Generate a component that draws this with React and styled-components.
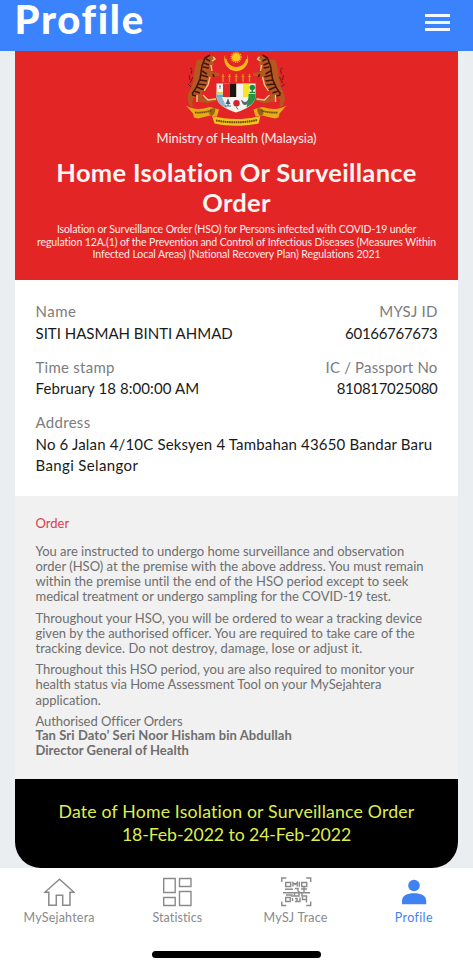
import React from 'react';
import styled, { createGlobalStyle } from 'styled-components';

const GlobalStyle = createGlobalStyle`
  * { box-sizing: border-box; }
  html, body { margin: 0; padding: 0; background: #fff; }
  body { font-family: Lato, "Liberation Sans", sans-serif; }
`;

const Screen = styled.div`
  display: flex;
  flex-direction: column;
  width: 473px;
  height: 967px;
  overflow: hidden;
  background: #fff;
`;

const Header = styled.header`
  display: flex;
  flex: none;
  align-items: flex-start;
  justify-content: space-between;
  height: 51px;
  padding: 0 23px 0 14.5px;
  background: #3a83fd;
`;

const PageTitle = styled.h1`
  margin: 0;
  color: #fff;
  font-size: 40px;
  font-weight: 900;
  line-height: 38px;
  letter-spacing: 1.7px;
  font-variant-ligatures: none;
`;

const MenuButton = styled.button`
  display: flex;
  flex-direction: column;
  gap: 4px;
  width: 25px;
  margin-top: 14px;
  padding: 0;
  border: 0;
  background: none;
`;

const MenuBar = styled.span`
  width: 100%;
  height: 3px;
  background: #f3f8ff;
`;

const Content = styled.main`
  flex: none;
  height: 817px;
  padding: 0 15px;
  background: #eaeef0;
`;

const Card = styled.article`
  display: flex;
  flex-direction: column;
  height: 816.5px;
  border-radius: 0 0 26px 26px;
  overflow: hidden;
  background: #fff;
`;

const Line = styled.span`
  display: block;
  white-space: nowrap;
  letter-spacing: ${(p) => p.$track || 0}px;
  font-variant-ligatures: none;
`;

const Banner = styled.section`
  height: 229px;
  text-align: center;
  color: #ffecea;
  background: #e32526;
`;

const CrestBox = styled.div`
  display: flex;
  justify-content: center;
  height: 79px;

  svg { display: block; }
`;

const Ministry = styled.div`
  font-size: 13px;
  line-height: 16px;
`;

const BannerTitle = styled.h2`
  margin: 11px 0 6px;
  color: #fff4f2;
  font-size: 25.5px;
  font-weight: 700;
  line-height: 30px;
`;

const BannerNote = styled.p`
  margin: 0;
  font-size: 10.5px;
  line-height: 12.5px;
`;

const Details = styled.section`
  display: flex;
  flex-direction: column;
  gap: 12.5px;
  height: 216px;
  padding: 21px 20.5px 0;
`;

const FieldRow = styled.div`
  display: flex;
  justify-content: space-between;
`;

const Field = styled.div`
  font-size: 15px;
  line-height: 21.5px;
  text-align: ${(p) => (p.$end ? 'right' : 'left')};
`;

const Label = styled(Line)`
  color: #7c7c7c;
`;

const Value = styled(Line)`
  color: #1a1a1a;
`;

const OrderSection = styled.section`
  height: 283px;
  padding: 19.5px 20.5px 0;
  color: #6e6e6e;
  font-size: 13px;
  line-height: 15.2px;
  background: #f1f1f1;
`;

const OrderHeading = styled.h3`
  margin: 0 0 13px;
  color: #d6404f;
  font-size: 13px;
  font-weight: 400;
`;

const Paragraph = styled.p`
  margin: 0 0 6px;
`;

const Signature = styled.div`
  font-weight: 700;
  margin-top: -1px;
`;

const Period = styled.section`
  flex: 1;
  padding-top: 20.5px;
  color: #dfee4e;
  font-size: 17.7px;
  line-height: 23.5px;
  text-align: center;
  background: #000;
`;

const TabBar = styled.nav`
  display: grid;
  grid-template-columns: repeat(4, 1fr);
  flex: none;
  height: 83px;
  padding-top: 8px;
`;

const Tab = styled.a`
  display: flex;
  flex-direction: column;
  align-items: center;
  gap: 2px;
  color: ${(p) => (p.$active ? '#3f83f2' : '#8a8a8a')};
  font-size: 12.5px;
  line-height: 16px;

  svg { display: block; width: 32px; height: 32px; }
`;

const HomeIndicator = styled.div`
  align-self: center;
  width: 169px;
  height: 7px;
  border-radius: 4px;
  background: #000;
`;

const Tiger = () => (
  <g>
    <path d="M6 19l-1 4M3 24l1 5M7 26l-3 6M2 33l3 3M4 17l2 1" stroke="#5a1716" strokeWidth="0.9" fill="none" />
    <path d="M20 8c2-3 7-4 9-2l1 3-3 2 1 3-4 2 1 5 9 1-1 3-10 1-1 7c-1 4-3 6-6 8l0 6 10 1 5-1-1 3-8 2-9-1-4-6c-3 4-3 6-2 11l-3-1c-3-5-3-11 0-16 3-5 3-9 4-16 1-6 2-11 3-14z" fill="#b4581f" />
    <path d="M20 8l4 2M18 12l5 2M17 16l6 1M16 20l5 3M15 24l7 2M14 29l7 1M12 33l8 1M11 36l7 3M8 40l6 2M6 44l5 1M27 23l1 3M24 4l-5 3-3 8-2 13-4 9-4 6" stroke="#40150f" strokeWidth="1.5" fill="none" />
    <path d="M27 6l2 2-3 2M25 14l1 6M24 26l-2 8-4 6M17 44l5 5 8-1M11 44l0 7" stroke="#ffd08a" strokeWidth="1.3" fill="none" />
  </g>
);

const Crest = () => (
  <svg width="101" height="76" viewBox="0 0 101 76">
    <path d="M39.200 3.500A12 12 0 1 0 61.300 3.500A11.200 11.200 0 1 1 39.200 3.500Z" fill="#f8b91b" />
    <path d="M39.500 8a11 11 0 0 0 21.500 0" stroke="#f8b91b" strokeWidth="1.500" fill="none" />
    <circle cx="50.200" cy="6.300" r="4.300" fill="#fdc51d" />
    <circle cx="50.200" cy="6.300" r="4.900" fill="none" stroke="#f6a91f" strokeWidth="1.500" strokeDasharray="1.100 .8" />
    <Tiger />
    <g transform="translate(100.500 0) scale(-1 1)"><Tiger /></g>
    <path d="M37 23v8M43.500 23v8M50.200 23v8M57 23v8M63.500 23v8" stroke="#ee8b22" strokeWidth="1.300" />
    <path d="M35.500 25.500h3M42 25.500h3M48.700 25.500h3M55.500 25.500h3M62 25.500h3" stroke="#ee8b22" strokeWidth="0.800" />
    <path d="M30.500 32.500H69.500V46C68.500 54 60 58 50 61.500C40 58 31.500 54 30.500 46Z" fill="#f6f4ee" />
    <path d="M37 32.500h6.500V46H37z" fill="#e32526" />
    <path d="M43.500 32.500h6.700V46h-6.700z" fill="#1d1512" />
    <path d="M57 32.500h6.300V46H57z" fill="#f6e52b" />
    <path d="M30.500 41h6.500v2h-6.500z" fill="#efcf3c" />
    <path d="M30.500 43.500h6.500v2.500h-6.500z" fill="#5eb4cc" />
    <path d="M33 35.500l2 0M34 34v4" stroke="#85878c" strokeWidth="1" />
    <circle cx="66.300" cy="36.500" r="2.700" fill="#1b8a3c" />
    <path d="M66.300 37v4M63.500 41.500h5.500" stroke="#1b8a3c" strokeWidth="1.600" />
    <path d="M30.500 46h5.500l5 11.500c-6-3-10-6-10.500-11.500z" fill="#8bb5ca" />
    <path d="M69.500 43v3c-.8 5-4.500 8-9 10.500l2-10.500V43z" fill="#249447" />
    <path d="M42 48l2.500 5h-5z" fill="#44659b" />
    <path d="M42 48v7M39 55h6" stroke="#394d66" strokeWidth="0.800" />
    <circle cx="50.500" cy="52.300" r="3.200" fill="#cf2334" />
    <path d="M50 55.500l2 3" stroke="#557844" strokeWidth="1" />
    <path d="M55 49c2 0 2 2 4 2s2-2 4-2c-1 3-2 5-4 5s-3-2-4-5z" fill="#606572" />
    <path d="M0 54.500c7 4.500 15 4 24 1.500l9 2.500-2 7-7-1-12 3-4-1-1-4z" fill="#e5ad18" />
    <path d="M100.500 54.500c-7 4.500-15 4-24 1.500l-9 2.500 2 7 7-1 12 3 4-1 1-4z" fill="#e5ad18" />
    <path d="M26 65c2-1 4-5 3-8l-5 1-1 5zM74.500 65c-2-1-4-5-3-8l5 1 1 5z" fill="#9c6412" />
    <path d="M26 65c16 4 32 4 48.500 0l-2 7.500c-15 3-30 3-44 0z" fill="#f0c31e" />
    <path d="M9 61.500c6 .5 11-.5 17-2M75 59.500c6 1.500 10 2.500 17 2" stroke="#6e460c" strokeWidth="1.800" strokeDasharray="1.500 .6" fill="none" />
    <path d="M30 69.500c14 2.500 28 2.500 41-.5" stroke="#6c4a0c" strokeWidth="2" strokeDasharray="1.600 .6" fill="none" />
  </svg>
);

const HomeIcon = () => (
  <svg viewBox="0 0 32 32" fill="none" stroke="currentColor" strokeWidth="1.500">
    <path d="M16.500 3.200L1.800 16.300H5.800V29.300H13.300V19.300H19.700V29.300H27V16.300H31L25.500 11.300Z" />
  </svg>
);

const StatisticsIcon = () => (
  <svg viewBox="0 0 32 32" fill="none" stroke="currentColor" strokeWidth="1.400">
    <path d="M2.700 2.500h11.500v14H2.700zM18.500 2.500h11.500v8H18.500zM2.700 21.500h11.500v8H2.700zM18.500 15.500h11.500v14H18.500z" />
  </svg>
);

const TraceIcon = () => (
  <svg viewBox="0 0 32 32" fill="none" stroke="currentColor" strokeWidth="1.400">
    <path d="M1.800 6V2h4.500M26.200 2h4.500v4M1.800 25.500v4h4.500M26.200 29.500h4.500v-4" />
    <path d="M5.700 6.500h5v4h-5zM21.700 6.500h5v4h-5zM5.700 21.500h4.500v4H5.700z" />
    <path d="M13 10.500v-4l2.200 2 2-2v4M19.300 5.800v5M5 13.200h8M15 12.500h3v3M21 13h6M24 10.500v5.500M3 16.700h27M6 19h6v2M14.500 17v3M13 20h6v-5M22 17v3h5M12.500 22v3M15 22.500h2v3h3v-4M22.500 21v2.500h4M26.500 19.500v7M15 25.500h2" />
  </svg>
);

const ProfileIcon = () => (
  <svg viewBox="0 0 32 32" fill="currentColor">
    <circle cx="16" cy="9.500" r="5.800" />
    <path d="M4 28.300V25C4 19.500 9 17.200 16 17.200S28.200 19.500 28.200 25V28.300Z" />
  </svg>
);

const tabs = [
  { name: 'MySejahtera', icon: HomeIcon, track: 0.2 },
  { name: 'Statistics', icon: StatisticsIcon, track: 0.1 },
  { name: 'MySJ Trace', icon: TraceIcon, track: 0.22 },
  { name: 'Profile', icon: ProfileIcon, track: 0.35, active: true },
];

const noteLines = [
  ['Isolation or Surveillance Order (HSO) for Persons infected with COVID-19 under', -0.115],
  ['regulation 12A.(1) of the Prevention and Control of Infectious Diseases (Measures Within', -0.11],
  ['Infected Local Areas) (National Recovery Plan) Regulations 2021', -0.075],
];

const paragraphs = [
  [
    ['You are instructed to undergo home surveillance and observation', -0.02],
    ['order (HSO) at the premise with the above address. You must remain', -0.008],
    ['within the premise until the end of the HSO period except to seek', -0.03],
    ['medical treatment or undergo sampling for the COVID-19 test.', -0.025],
  ],
  [
    ['Throughout your HSO, you will be ordered to wear a tracking device', 0.005],
    ['given by the authorised officer. You are required to take care of the', -0.01],
    ['tracking device. Do not destroy, damage, lose or adjust it.', 0.041],
  ],
  [
    ['Throughout this HSO period, you are also required to monitor your', -0.01],
    ['health status via Home Assessment Tool on your MySejahtera', -0.06],
    ['application.', 0],
  ],
];

const Lines = ({ items }) =>
  items.map(([text, track]) => (
    <Line key={text} $track={track}>{text}</Line>
  ));

export default function App() {
  return (
    <Screen>
      <GlobalStyle />
      <Header>
        <PageTitle>Profile</PageTitle>
        <MenuButton aria-label="Menu">
          <MenuBar />
          <MenuBar />
          <MenuBar />
        </MenuButton>
      </Header>
      <Content>
        <Card>
          <Banner>
            <CrestBox><Crest /></CrestBox>
            <Ministry><Line $track={-0.098}>Ministry of Health (Malaysia)</Line></Ministry>
            <BannerTitle>
              <Line $track={0.33}>Home Isolation Or Surveillance</Line>
              <Line $track={0.25}>Order</Line>
            </BannerTitle>
            <BannerNote><Lines items={noteLines} /></BannerNote>
          </Banner>
          <Details>
            <FieldRow>
              <Field>
                <Label $track={0.5}>Name</Label>
                <Value>SITI HASMAH BINTI AHMAD</Value>
              </Field>
              <Field $end>
                <Label $track={0.2}>MYSJ ID</Label>
                <Value $track={-0.3}>60166767673</Value>
              </Field>
            </FieldRow>
            <FieldRow>
              <Field>
                <Label $track={0.26}>Time stamp</Label>
                <Value $track={0.09}>February 18 8:00:00 AM</Value>
              </Field>
              <Field $end>
                <Label $track={0.17}>IC / Passport No</Label>
                <Value $track={-0.3}>810817025080</Value>
              </Field>
            </FieldRow>
            <Field>
              <Label $track={0.3}>Address</Label>
              <Value $track={0.165}>No 6 Jalan 4/10C Seksyen 4 Tambahan 43650 Bandar Baru</Value>
              <Value $track={0.36}>Bangi Selangor</Value>
            </Field>
          </Details>
          <OrderSection>
            <OrderHeading>Order</OrderHeading>
            {paragraphs.map((items) => (
              <Paragraph key={items[0][0]}><Lines items={items} /></Paragraph>
            ))}
            <Line $track={-0.068}>Authorised Officer Orders</Line>
            <Signature>
              <Line $track={0.08}>Tan Sri Dato’ Seri Noor Hisham bin Abdullah</Line>
              <Line $track={0.02}>Director General of Health</Line>
            </Signature>
          </OrderSection>
          <Period>
            <Line $track={0.18}>Date of Home Isolation or Surveillance Order</Line>
            <Line $track={-0.1}>18-Feb-2022 to 24-Feb-2022</Line>
          </Period>
        </Card>
      </Content>
      <TabBar>
        {tabs.map(({ name, icon: Icon, track, active }) => (
          <Tab key={name} $active={active}>
            <Icon />
            <Line $track={track}>{name}</Line>
          </Tab>
        ))}
      </TabBar>
      <HomeIndicator />
    </Screen>
  );
}
